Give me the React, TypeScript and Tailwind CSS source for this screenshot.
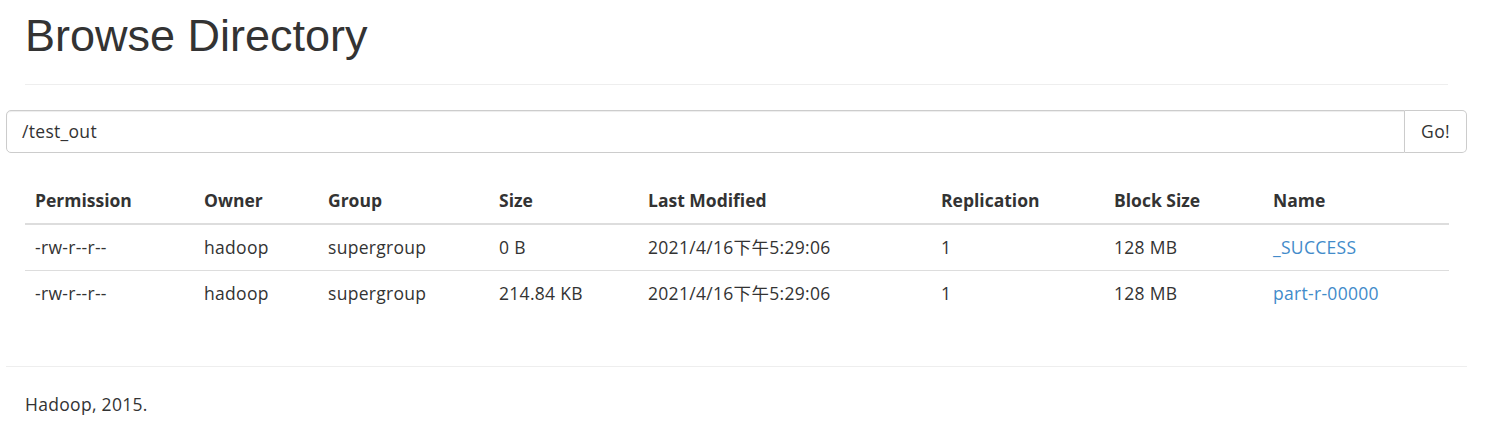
const rows = [
  {
    permission: "-rw-r--r--",
    owner: "hadoop",
    group: "supergroup",
    size: "0 B",
    modified: "2021/4/16下午5:29:06",
    replication: "1",
    blockSize: "128 MB",
    name: "_SUCCESS",
  },
  {
    permission: "-rw-r--r--",
    owner: "hadoop",
    group: "supergroup",
    size: "214.84 KB",
    modified: "2021/4/16下午5:29:06",
    replication: "1",
    blockSize: "128 MB",
    name: "part-r-00000",
  },
];

const columns = [
  { label: "Permission", w: "w-[169px]" },
  { label: "Owner", w: "w-[124px]" },
  { label: "Group", w: "w-[171px]" },
  { label: "Size", w: "w-[149px]" },
  { label: "Last Modified", w: "w-[293px]" },
  { label: "Replication", w: "w-[173px]" },
  { label: "Block Size", w: "w-[159px]" },
  { label: "Name", w: "w-[186px]" },
];

const body = "font-['Open_Sans','Noto_Sans_CJK_SC',sans-serif] text-[17.5px] leading-[25px]";

export default function App() {
  return (
    <div className={`w-[1506px] h-[431px] overflow-hidden bg-white text-[#333] ${body}`}>
      <div className="ml-[6px] w-[1461px]">
        {/* Page header */}
        <div className="px-[19px]">
          <div className="pb-[23px] border-b border-[#eee]">
            <h1 className="pt-[11px] font-['Liberation_Sans',Arial,sans-serif] text-[45px] leading-[50px] font-normal text-[#333]">
              Browse Directory
            </h1>
          </div>
        </div>

        {/* Path input */}
        <div className="mt-[25px] flex h-[43px] tracking-[0.3px]">
          <div className="flex-1 flex items-center border border-[#ccc] rounded-l-[5px] px-[15px] shadow-[inset_0_1px_1px_rgba(0,0,0,0.075)]">
            /test_out
          </div>
          <button className="w-[62px] border border-l-0 border-[#ccc] rounded-r-[5px] bg-white text-[#333]">
            Go!
          </button>
        </div>

        {/* Listing */}
        <div className="px-[19px] mt-[25px]">
          <table className="w-[1424px] border-collapse">
            <thead>
              <tr>
                {columns.map((c) => (
                  <th
                    key={c.label}
                    className={`${c.w} text-left font-bold px-[10px] py-[10px] border-b-[2.5px] border-[#ddd]`}
                  >
                    {c.label}
                  </th>
                ))}
              </tr>
            </thead>
            <tbody className="tracking-[0.3px]">
              {rows.map((r, i) => (
                <tr key={r.name}>
                  {[r.permission, r.owner, r.group, r.size, r.modified, r.replication, r.blockSize].map((v, j) => (
                    <td
                      key={j}
                      className={`px-[10px] py-[10px] ${i > 0 ? "border-t border-[#ddd]" : ""}`}
                    >
                      {v}
                    </td>
                  ))}
                  <td className={`px-[10px] py-[10px] ${i > 0 ? "border-t border-[#ddd]" : ""}`}>
                    <a href="#" className="text-[#428bca]">
                      {r.name}
                    </a>
                  </td>
                </tr>
              ))}
            </tbody>
          </table>
        </div>

        {/* Footer */}
        <div className="mt-[50px] border-t border-[#eee] pt-[25px] px-[19px] tracking-[0.3px]">
          <p>Hadoop, 2015.</p>
        </div>
      </div>
    </div>
  );
}
